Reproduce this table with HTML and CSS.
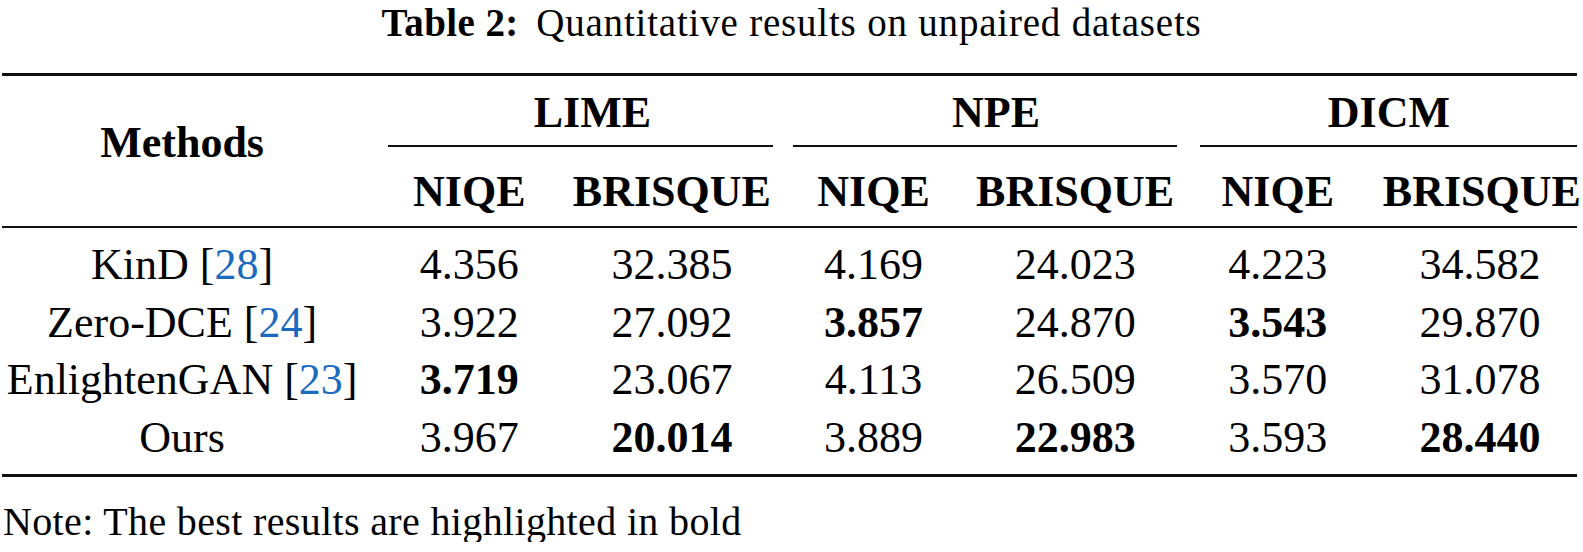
FILE: index.html
```html
<!DOCTYPE html>
<html lang="en">
  <head>
    <meta charset="UTF-8" />
    <meta name="viewport" content="width=device-width, initial-scale=1.0" />
    <title>Table 2</title>
    <link rel="stylesheet" href="styles.css">
  </head>
  <body>
    <!-- caption -->
    <div class="caption"><b class="label">Table 2:</b>Quantitative results on unpaired datasets</div>

    <table class="results">
      <colgroup>
        <col class="c-method" />
        <col class="c-niqe" />
        <col class="c-bris" />
        <col class="c-niqe2" />
        <col class="c-bris" />
        <col class="c-niqe" />
        <col class="c-bris3" />
      </colgroup>
      <thead>
        <tr class="groups">
          <th rowspan="2" class="method-head">Methods</th>
          <th colspan="2"><div class="gname lime">LIME</div><div class="cline"></div></th>
          <th colspan="2"><div class="gname npe">NPE</div><div class="cline"></div></th>
          <th colspan="2"><div class="gname dicm">DICM</div><div class="cline last"></div></th>
        </tr>
        <tr class="metrics">
          <th>NIQE</th>
          <th>BRISQUE</th>
          <th>NIQE</th>
          <th>BRISQUE</th>
          <th>NIQE</th>
          <th class="end">BRISQUE</th>
        </tr>
      </thead>
      <tbody>
        <tr>
          <td class="method">KinD [<span class="ref">28</span>]</td>
          <td>4.356</td>
          <td>32.385</td>
          <td>4.169</td>
          <td>24.023</td>
          <td>4.223</td>
          <td class="end">34.582</td>
        </tr>
        <tr>
          <td class="method">Zero-DCE [<span class="ref">24</span>]</td>
          <td>3.922</td>
          <td>27.092</td>
          <td><b>3.857</b></td>
          <td>24.870</td>
          <td><b>3.543</b></td>
          <td class="end">29.870</td>
        </tr>
        <tr>
          <td class="method">EnlightenGAN [<span class="ref">23</span>]</td>
          <td><b>3.719</b></td>
          <td>23.067</td>
          <td>4.113</td>
          <td>26.509</td>
          <td>3.570</td>
          <td class="end">31.078</td>
        </tr>
        <tr>
          <td class="method">Ours</td>
          <td>3.967</td>
          <td><b>20.014</b></td>
          <td>3.889</td>
          <td><b>22.983</b></td>
          <td>3.593</td>
          <td class="end"><b>28.440</b></td>
        </tr>
      </tbody>
    </table>

    <p class="note">Note: The best results are highlighted in bold</p>
  </body>
</html>
```

FILE: styles.css
```css
body {
  margin: 0;
  background: #fff;
  color: #000;
  font-family: "Liberation Serif", "Times New Roman", serif;
}
.caption {
  padding-top: 3px;
  font-size: 39px;
  line-height: 40px;
  letter-spacing: 0.8px;
  text-align: center;
  white-space: nowrap;
}
.label {
  margin-right: 0.45em;
  letter-spacing: 0.4px;
}
.results {
  margin: 30px 0 0 2px;
  width: 1575px;
  table-layout: fixed;
  border-collapse: separate;
  border-spacing: 0;
  font-size: 44px;
}
.c-method {
  width: 376px;
}
.c-niqe {
  width: 182px;
}
.c-niqe2 {
  width: 180px;
}
.c-bris {
  width: 223px;
}
.c-bris3 {
  width: 208px;
}
th,
td {
  padding: 0;
  text-align: center;
  white-space: nowrap;
}
th {
  font-weight: bold;
  line-height: 48px;
}
.groups th {
  border-top: 3px solid #111;
  padding-top: 13px;
  vertical-align: top;
}
.method-head {
  padding-right: 16px;
  padding-top: 43px !important;
  border-bottom: 2px solid #111;
}
.gname.lime {
  padding-left: 23px;
}
.gname.npe {
  padding-left: 22px;
}
.gname.dicm {
  padding-left: 14px;
}
.cline {
  margin: 8px 10px 0 10px;
  border-bottom: 2px solid #111;
}
.cline.last {
  margin: 8px 0 0 13px;
}
.metrics th {
  padding-top: 21px;
  padding-bottom: 10px;
  border-bottom: 2px solid #111;
}
td {
  line-height: 57.5px;
}
td.method {
  padding-right: 16px;
}
.end {
  padding-left: 14px;
}
tbody tr:first-child td {
  padding-top: 8px;
}
tbody tr:last-child td {
  padding-bottom: 8px;
  border-bottom: 3px solid #111;
}
.ref {
  color: #1b6ac0;
}
.note {
  margin: 25px 0 0 0;
  padding-left: 3px;
  font-size: 40px;
  line-height: 40px;
  letter-spacing: 0.35px;
  white-space: nowrap;
}
```
